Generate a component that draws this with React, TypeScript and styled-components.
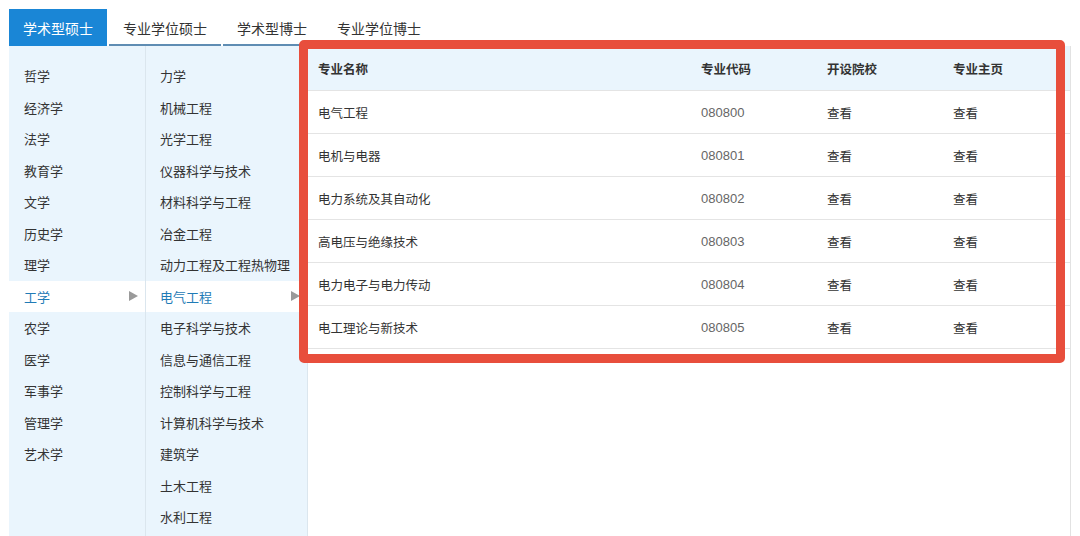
import React from "react";
import styled, { createGlobalStyle } from "styled-components";

const Global = createGlobalStyle`
  html, body { margin: 0; padding: 0; background: #fff; overflow: hidden; }
  body { font-family: "Liberation Sans", "Noto Sans CJK SC", sans-serif; color: #333; }
  * { box-sizing: border-box; }
`;

const Page = styled.div`
  position: relative;
  width: 1080px;
  height: 536px;
  padding: 9px 0 0 9px;
  overflow: hidden;
`;

const Tabs = styled.div`
  display: flex;
  gap: 2px;
  height: 37px;
`;

const Tab = styled.div<{ $active?: boolean }>`
  display: flex;
  align-items: center;
  padding: 2px 14px 0;
  font-size: 14px;
  height: 37px;
  color: ${(p) => (p.$active ? "#fff" : "#333")};
  background: ${(p) => (p.$active ? "#1a86d6" : "transparent")};
  border-bottom: 2px solid ${(p) => (p.$active ? "#1a86d6" : "#5f8db3")};
`;

const Panel = styled.div`
  display: flex;
  height: 490px;
`;

const Column = styled.div<{ $w: number }>`
  width: ${(p) => p.$w}px;
  flex: none;
  background: #eaf5fd;
  border-right: 1px solid #dbe6ee;
  padding-top: 14px;
  display: flex;
  flex-direction: column;
  overflow: hidden;
`;

const Item = styled.div<{ $active?: boolean; $pad: number }>`
  position: relative;
  flex: none;
  height: 31.5px;
  display: flex;
  align-items: center;
  padding-left: ${(p) => p.$pad}px;
  font-size: 13px;
  color: ${(p) => (p.$active ? "#1f7bb6" : "#333")};
  background: ${(p) => (p.$active ? "#fff" : "transparent")};
`;

const Arrow = styled.span`
  position: absolute;
  right: 7px;
  top: 50%;
  margin-top: -5.5px;
  width: 0;
  height: 0;
  border-top: 5.5px solid transparent;
  border-bottom: 5.5px solid transparent;
  border-left: 9px solid #9a9a9a;
`;

const Content = styled.div`
  width: 763px;
  flex: none;
  border-right: 1px solid #e2e2e2;
`;

const Row = styled.div<{ $head?: boolean }>`
  display: grid;
  grid-template-columns: 383px 126px 126px 1fr;
  align-items: center;
  height: ${(p) => (p.$head ? 45 : 43)}px;
  padding-left: 10px;
  border-bottom: 1px solid #e4e4e4;
  background: ${(p) => (p.$head ? "#eaf5fd" : "#fff")};
  font-size: 12.5px;
  font-weight: ${(p) => (p.$head ? 700 : 400)};
  color: #333;
`;

const Code = styled.span`
  color: #666;
  font-size: 13px;
`;

const Highlight = styled.div`
  position: absolute;
  left: 299px;
  top: 40px;
  width: 766px;
  height: 323px;
  border: 9px solid #e84e3c;
  border-radius: 5px;
  pointer-events: none;
`;

const col1 = ["哲学", "经济学", "法学", "教育学", "文学", "历史学", "理学", "工学", "农学", "医学", "军事学", "管理学", "艺术学"];
const col2 = ["力学", "机械工程", "光学工程", "仪器科学与技术", "材料科学与工程", "冶金工程", "动力工程及工程热物理", "电气工程", "电子科学与技术", "信息与通信工程", "控制科学与工程", "计算机科学与技术", "建筑学", "土木工程", "水利工程"];
const rows = [
  ["电气工程", "080800"],
  ["电机与电器", "080801"],
  ["电力系统及其自动化", "080802"],
  ["高电压与绝缘技术", "080803"],
  ["电力电子与电力传动", "080804"],
  ["电工理论与新技术", "080805"],
];

export default function App() {
  return (
    <>
      <Global />
      <Page>
        <Tabs>
          <Tab $active>学术型硕士</Tab>
          <Tab>专业学位硕士</Tab>
          <Tab>学术型博士</Tab>
          <Tab>专业学位博士</Tab>
        </Tabs>
        <Panel>
          <Column $w={137}>
            {col1.map((t) => (
              <Item key={t} $pad={15} $active={t === "工学"}>
                {t}
                {t === "工学" && <Arrow />}
              </Item>
            ))}
          </Column>
          <Column $w={162}>
            {col2.map((t) => (
              <Item key={t} $pad={14} $active={t === "电气工程"}>
                {t}
                {t === "电气工程" && <Arrow />}
              </Item>
            ))}
          </Column>
          <Content>
            <Row $head>
              <span>专业名称</span>
              <span>专业代码</span>
              <span>开设院校</span>
              <span>专业主页</span>
            </Row>
            {rows.map(([n, c]) => (
              <Row key={c}>
                <span>{n}</span>
                <Code>{c}</Code>
                <span>查看</span>
                <span>查看</span>
              </Row>
            ))}
          </Content>
        </Panel>
        <Highlight />
      </Page>
    </>
  );
}
